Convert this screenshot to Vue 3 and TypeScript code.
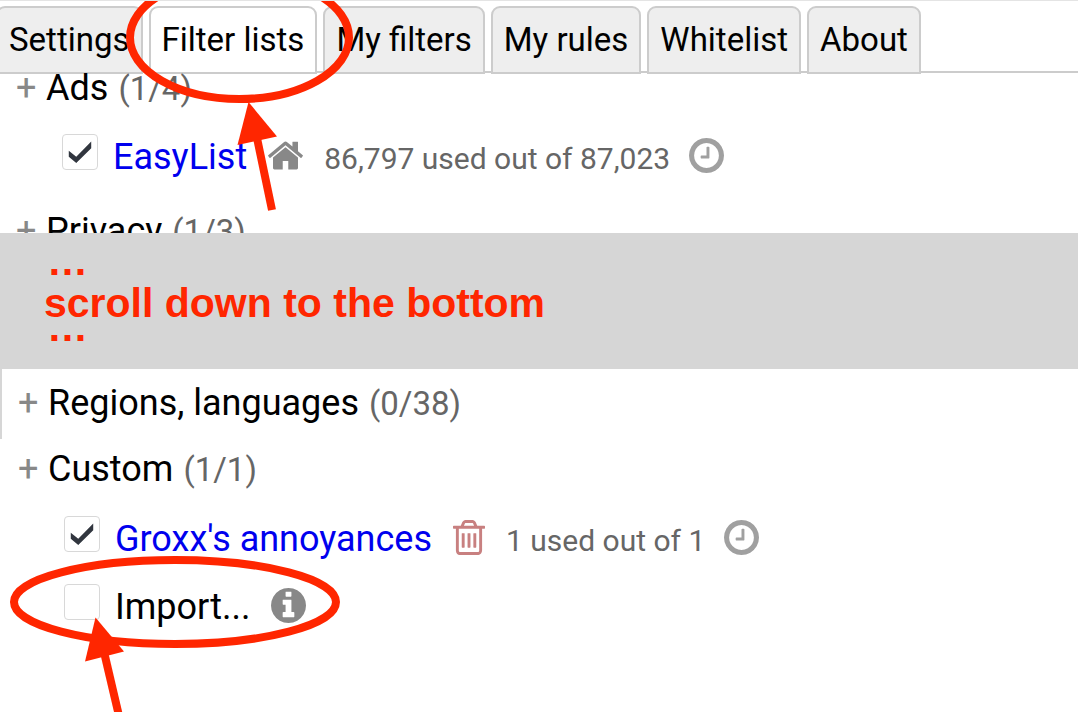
<script setup lang="ts">
import { ref } from 'vue'

interface FilterEntry {
  id: string
  name: string
  kind: 'link' | 'import'
  checked: boolean
  usage?: string
  icon: 'home' | 'trash' | 'info'
}

interface FilterGroup {
  id: string
  name: string
  count: string
  entries: FilterEntry[]
}

const tabs = ['Settings', 'Filter lists', 'My filters', 'My rules', 'Whitelist', 'About']
const activeTab = ref('Filter lists')

const topGroups = ref<FilterGroup[]>([
  {
    id: 'ads',
    name: 'Ads',
    count: '(1/4)',
    entries: [
      { id: 'easylist', name: 'EasyList', kind: 'link', checked: true, usage: '86,797 used out of 87,023', icon: 'home' },
    ],
  },
  { id: 'privacy', name: 'Privacy', count: '(1/3)', entries: [] },
])

const bottomGroups = ref<FilterGroup[]>([
  { id: 'regions', name: 'Regions, languages', count: '(0/38)', entries: [] },
  {
    id: 'custom',
    name: 'Custom',
    count: '(1/1)',
    entries: [
      { id: 'groxx', name: "Groxx's annoyances", kind: 'link', checked: true, usage: '1 used out of 1', icon: 'trash' },
      { id: 'import', name: 'Import...', kind: 'import', checked: false, icon: 'info' },
    ],
  },
])

const sections = [
  { id: 'upper', groups: topGroups },
  { id: 'lower', groups: bottomGroups },
]

const icons = {
  home: {
    box: '89 253 1614 1283',
    label: 'Home page',
    path: 'M1472 992v480q0 26-19 45t-45 19h-384v-384h-256v384h-384q-26 0-45-19t-19-45v-480q0-1 .5-3t.5-3l575-474 575 474q1 2 1 6zm223-69l-62 74q-8 9-21 11h-3q-13 0-21-7l-692-577-692 577q-12 8-24 7-13-2-21-11l-62-74q-8-10-7-23.5t11-21.5l719-599q32-26 76-26t76 26l244 204v-195q0-14 9-23t23-9h192q14 0 23 9t9 23v408l219 182q10 8 11 21.5t-7 23.5z',
  },
  trash: {
    box: '192 128 1408 1536',
    label: 'Remove',
    path: 'M704 736v576q0 14-9 23t-23 9h-64q-14 0-23-9t-9-23v-576q0-14 9-23t23-9h64q14 0 23 9t9 23zm256 0v576q0 14-9 23t-23 9h-64q-14 0-23-9t-9-23v-576q0-14 9-23t23-9h64q14 0 23 9t9 23zm256 0v576q0 14-9 23t-23 9h-64q-14 0-23-9t-9-23v-576q0-14 9-23t23-9h64q14 0 23 9t9 23zm128 724v-948h-896v948q0 22 7 40.5t14.5 27 10.5 8.5h832q3 0 10.5-8.5t14.5-27 7-40.5zm-672-1076h448l-48-117q-7-9-17-11h-317q-10 2-17 11zm928 32v64q0 14-9 23t-23 9h-96v948q0 83-47 143.5t-113 60.5h-832q-66 0-113-58.5t-47-141.5v-952h-96q-14 0-23-9t-9-23v-64q0-14 9-23t23-9h309l70-167q15-37 54-63t79-26h320q40 0 79 26t54 63l70 167h309q14 0 23 9t9 23z',
  },
  info: {
    box: '128 128 1536 1536',
    label: 'Help',
    path: 'M1152 1376v-160q0-14-9-23t-23-9h-96v-512q0-14-9-23t-23-9h-320q-14 0-23 9t-9 23v160q0 14 9 23t23 9h96v320h-96q-14 0-23 9t-9 23v160q0 14 9 23t23 9h448q14 0 23-9t9-23zm-128-896v-160q0-14-9-23t-23-9h-192q-14 0-23 9t-9 23v160q0 14 9 23t23 9h192q14 0 23-9t9-23zm640 416q0 209-103 385.5t-279.5 279.5-385.5 103-385.5-103-279.5-279.5-103-385.5 103-385.5 279.5-279.5 385.5-103 385.5 103 279.5 279.5 103 385.5z',
  },
}

const clockPath =
  'M1024 544v448q0 14-9 23t-23 9h-320q-14 0-23-9t-9-23v-64q0-14 9-23t23-9h224v-352q0-14 9-23t23-9h64q14 0 23 9t9 23zm416 352q0-148-73-273t-198-198-273-73-273 73-198 198-73 273 73 273 198 198 273 73 273-73 198-198 73-273zm224 0q0 209-103 385.5t-279.5 279.5-385.5 103-385.5-103-279.5-279.5-103-385.5 103-385.5 279.5-279.5 385.5-103 385.5 103 279.5 279.5 103 385.5z'
</script>

<template>
  <div class="page">
    <nav class="tabs" role="tablist">
      <button
        v-for="tab in tabs"
        :key="tab"
        type="button"
        role="tab"
        class="tab"
        :class="{ active: tab === activeTab }"
        :aria-selected="tab === activeTab"
        @click="activeTab = tab"
      >{{ tab }}</button>
    </nav>

    <template v-for="section in sections" :key="section.id">
      <section v-if="section.id === 'lower'" class="band">
        <p class="dots lead">…</p>
        <p class="hint">scroll down to the bottom</p>
        <p class="dots">…</p>
      </section>

      <main class="lists" :class="section.id">
        <div v-for="group in section.groups.value" :key="group.id" class="group" :class="group.id">
          <button type="button" class="group-head">
            <span class="plus">+</span>
            <span class="group-name">{{ group.name }}</span>
            <span class="count">{{ group.count }}</span>
          </button>
          <ul v-if="group.entries.length" class="entries">
            <li v-for="entry in group.entries" :key="entry.id" class="entry">
              <input :id="entry.id" v-model="entry.checked" type="checkbox" class="box" :aria-label="entry.name" />
              <a v-if="entry.kind === 'link'" class="name" href="#">{{ entry.name }}</a>
              <label v-else class="name" :for="entry.id">{{ entry.name }}</label>
              <svg class="icon" :class="entry.icon" :viewBox="icons[entry.icon].box" role="img" :aria-label="icons[entry.icon].label">
                <path :d="icons[entry.icon].path" />
              </svg>
              <template v-if="entry.usage">
                <span class="usage">{{ entry.usage }}</span>
                <svg class="icon clock" viewBox="128 128 1536 1536" role="img" aria-label="Last updated">
                  <path :d="clockPath" />
                </svg>
              </template>
            </li>
          </ul>
        </div>
      </main>
    </template>

    <svg class="marks" width="400" height="712" viewBox="0 0 400 712" aria-hidden="true">
      <g fill="none" stroke="#ff2600" stroke-width="8">
        <ellipse cx="239.5" cy="37.5" rx="109.5" ry="61.5" />
        <path d="M257 138L272 210" />
        <ellipse cx="175" cy="602" rx="161" ry="42" />
        <path d="M104 652L119.500 718" />
      </g>
      <g fill="#ff2600">
        <path d="M248.500 102L277 136.500L237.500 145Z" />
        <path d="M95.500 617.500L124 651.500L85 661.500Z" />
      </g>
    </svg>
  </div>
</template>

<style>
body {
  margin: 0;
  background: #fff;
}
</style>

<style scoped>
.page {
  position: relative;
  min-height: 100vh;
  overflow: hidden;
  box-sizing: border-box;
  border-top: 1px solid #e4e4e4;
  background: #fff;
  color: #000;
  font-family: Roboto, "Liberation Sans", sans-serif;
  font-size: 36px;
}

.tabs {
  display: flex;
  gap: 6px;
  height: 70px;
  margin-left: -4px;
  border-bottom: 2px solid #ccc;
  align-items: flex-end;
}

.tab {
  flex: none;
  height: 68px;
  margin: 0 0 -3px;
  padding: 0 11px;
  border: 2px solid #ccc;
  border-radius: 9px 9px 0 0;
  background: #eee;
  color: #000;
  font: 33px/64px Roboto, "Liberation Sans", sans-serif;
  white-space: nowrap;
}

.tab.active {
  background: #fff;
}

.lists {
  overflow: hidden;
}

.upper {
  height: 160px;
}

.group-head {
  display: flex;
  align-items: baseline;
  width: 100%;
  padding: 0 0 0 16px;
  border: 0;
  background: none;
  color: #000;
  font: 36px/66px Roboto, "Liberation Sans", sans-serif;
  text-align: left;
  white-space: nowrap;
}

.plus {
  width: 30px;
  color: #888;
}

.count {
  margin-left: 10px;
  color: #666;
  font-size: 33px;
}

.ads {
  margin-top: -18px;
}

.lower .group-head,
.lower .entries {
  margin-left: 2px;
}

.regions {
  padding: 1px 0 2px;
  border-left: 2px solid #d6d6d6;
}

.lower .regions .group-head {
  margin-left: 0;
}

.custom .group-head {
  line-height: 60px;
}

.entries {
  margin: 0 0 8px;
  padding: 0 0 0 62px;
  list-style: none;
}

.custom .entries {
  margin-top: 4px;
}

.entry {
  display: flex;
  align-items: center;
  height: 68px;
  line-height: 68px;
  white-space: nowrap;
}

.box {
  flex: none;
  appearance: none;
  box-sizing: border-box;
  width: 36px;
  height: 36px;
  margin: 0 15px 8px 0;
  border: 1px solid #d8d8d8;
  border-radius: 4px;
  background: #fff;
}

.box:checked::before {
  content: "";
  display: block;
  height: 100%;
  background: #31363f;
  clip-path: polygon(17% 46%, 39% 64%, 83% 19%, 83% 39%, 39% 82%, 17% 64%);
}

.name {
  padding-top: 1px;
  color: #000;
}

a.name {
  color: #0000ee;
  text-decoration: none;
}

.icon {
  flex: none;
  width: 35px;
  height: 35px;
  margin: 0 0 2px 21px;
  fill: #888;
}

.trash {
  width: 32px;
  fill: #c88080;
}

.clock {
  margin-left: 19px;
  fill: #a0a0a0;
}

.usage {
  margin-left: 21px;
  padding-top: 5px;
  color: #666;
  font-size: 30px;
  line-height: 64px;
}

.band {
  padding: 0 0 32px 44px;
  background: #d6d6d6;
  color: #ff2600;
  font: bold 41px/28px "Liberation Sans", Arial, sans-serif;
}

.band p {
  margin: 0;
}

.band .dots {
  padding-left: 3px;
  line-height: 20px;
}

.band .dots.lead {
  line-height: 56px;
}

.marks {
  position: absolute;
  top: -1px;
  left: 0;
  pointer-events: none;
}
</style>
